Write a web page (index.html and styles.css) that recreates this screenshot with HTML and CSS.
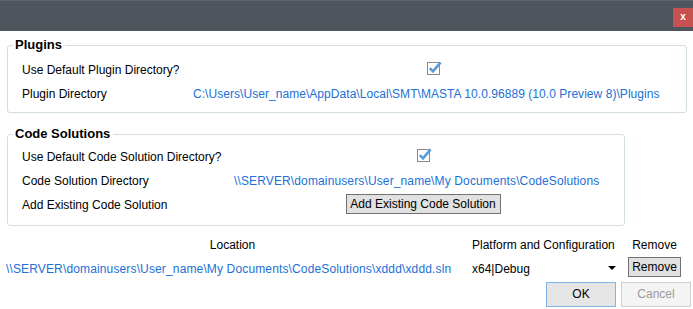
FILE: index.html
```html
<!DOCTYPE html>
<html lang="en">
<head>
<meta charset="utf-8">
<title>Options</title>
<link rel="stylesheet" href="styles.css">
</head>
<body>
<div class="dialog">
  <div class="titlebar"><div class="close">x</div></div>

  <fieldset class="group group-plugins">
    <legend>Plugins</legend>
    <div class="row">
      <span class="label">Use Default Plugin Directory?</span>
      <span class="value centered">
        <svg class="check" width="15" height="15" viewBox="0 0 15 15"><rect x="0.5" y="2.5" width="12" height="12" fill="#fff" stroke="#8a8a8a"/><path d="M2.8 8.2 L6 11.4 L13.6 2.4" fill="none" stroke="#5b9bd5" stroke-width="2.6"/></svg>
      </span>
    </div>
    <div class="row">
      <span class="label">Plugin Directory</span>
      <span class="value link link-plugin">C:\Users\User_name\AppData\Local\SMT\MASTA 10.0.96889 (10.0 Preview 8)\Plugins</span>
    </div>
  </fieldset>

  <fieldset class="group group-code">
    <legend>Code Solutions</legend>
    <div class="row">
      <span class="label">Use Default Code Solution Directory?</span>
      <span class="value centered">
        <svg class="check" width="15" height="15" viewBox="0 0 15 15"><rect x="0.5" y="2.5" width="12" height="12" fill="#fff" stroke="#8a8a8a"/><path d="M2.8 8.2 L6 11.4 L13.6 2.4" fill="none" stroke="#5b9bd5" stroke-width="2.6"/></svg>
      </span>
    </div>
    <div class="row">
      <span class="label">Code Solution Directory</span>
      <span class="value link link-code">\\SERVER\domainusers\User_name\My Documents\CodeSolutions</span>
    </div>
    <div class="row">
      <span class="label">Add Existing Code Solution</span>
      <span class="value centered"><button class="btn btn-std btn-add">Add Existing Code Solution</button></span>
    </div>
  </fieldset>

  <div class="table">
    <div class="th th-loc">Location</div>
    <div class="th th-plat">Platform and Configuration</div>
    <div class="th th-rem">Remove</div>
    <div class="td td-loc link link-table">\\SERVER\domainusers\User_name\My Documents\CodeSolutions\xddd\xddd.sln</div>
    <div class="td td-plat"><span>x64|Debug</span><span class="arrow"></span></div>
    <div class="td td-rem"><button class="btn btn-std btn-remove">Remove</button></div>
  </div>

  <div class="actions">
    <button class="btn btn-ok">OK</button>
    <button class="btn btn-cancel" disabled>Cancel</button>
  </div>
</div>
</body>
</html>
```

FILE: styles.css
```css
html, body {
  margin: 0;
  padding: 0;
  background: #ffffff;
}

body {
  font-family: "Liberation Sans", Arial, sans-serif;
  font-size: 12px;
  color: #000;
}

.dialog {
  width: 693px;
  height: 309px;
  overflow: hidden;
  background: #fff;
}

.titlebar {
  height: 31px;
  box-sizing: border-box;
  background: #4e555c;
  border-top: 1px solid #5d646a;
  padding-top: 7px;
  display: flex;
  justify-content: flex-end;
  align-items: flex-start;
}

.close {
  width: 20px;
  height: 19px;
  background: #c75050;
  color: #fff;
  font-weight: bold;
  font-size: 10px;
  line-height: 18px;
  text-align: center;
}

.group {
  margin: 0 0 0 7px;
  padding: 0;
  border: 1px solid #d3dde4;
  border-radius: 3px;
  box-sizing: border-box;
  min-width: 0;
}

.group legend {
  font-weight: bold;
  font-size: 13px;
  line-height: 16px;
  padding: 0 3px 0 2px;
  margin-left: -9px;
}

.group-plugins {
  width: 680px;
  margin-top: 6px;
  padding: 5px 13px 6px 14px;
}

.group-code {
  width: 618px;
  margin-top: 13px;
  padding: 3px 11px 8px 14px;
}

.row {
  display: grid;
  height: 24px;
  line-height: 24px;
  white-space: nowrap;
}

.group-plugins .row {
  grid-template-columns: 171px 1fr;
}

.group-code .row {
  grid-template-columns: 211px 1fr;
}

.value.centered {
  display: flex;
  justify-content: center;
  align-items: flex-start;
}

.check {
  display: block;
  margin-top: 2px;
  margin-left: 2px;
}

.link {
  color: #2170d6;
}

.link-plugin {
  letter-spacing: 0.05px;
}

.link-code {
  padding-left: 1px;
  letter-spacing: 0.13px;
}

.link-table {
  letter-spacing: 0.14px;
}

.btn {
  font-family: "Liberation Sans", Arial, sans-serif;
  font-size: 12px;
  padding: 0;
  margin: 0;
  box-sizing: border-box;
  color: #000;
}

.btn-std {
  background: #e1e1e1;
  border: 1px solid #717171;
  height: 20px;
  line-height: 18px;
}

.btn-add {
  width: 155px;
  margin-top: 1px;
}

.table {
  margin-top: 7px;
  display: grid;
  grid-template-columns: 465px 161px 57px;
  grid-template-rows: 24px 24px;
  white-space: nowrap;
}

.th {
  line-height: 24px;
}

.th-loc {
  text-align: center;
}

.th-plat {
  padding-left: 7px;
}

.th-rem {
  text-align: center;
}

.td {
  line-height: 24px;
}

.td-loc {
  padding-left: 6px;
}

.td-plat {
  display: flex;
  justify-content: space-between;
  align-items: center;
  padding: 0 10px 0 7px;
}

.arrow {
  width: 0;
  height: 0;
  border-left: 4px solid transparent;
  border-right: 4px solid transparent;
  border-top: 4px solid #000;
  margin-top: -2px;
}

.td-rem {
  display: flex;
  justify-content: center;
  align-items: flex-start;
}

.btn-remove {
  width: 53px;
}

.actions {
  margin-top: 1px;
  display: flex;
  justify-content: flex-end;
  gap: 5px;
  padding-right: 2px;
}

.btn-ok,
.btn-cancel {
  width: 70px;
  height: 25px;
  line-height: 23px;
}

.btn-ok {
  background: #e5e5e5;
  border: 1px solid #7eb4ea;
}

.btn-cancel {
  background: #f4f4f4;
  border: 1px solid #cfcfcf;
  color: #9a9a9a;
}
```
